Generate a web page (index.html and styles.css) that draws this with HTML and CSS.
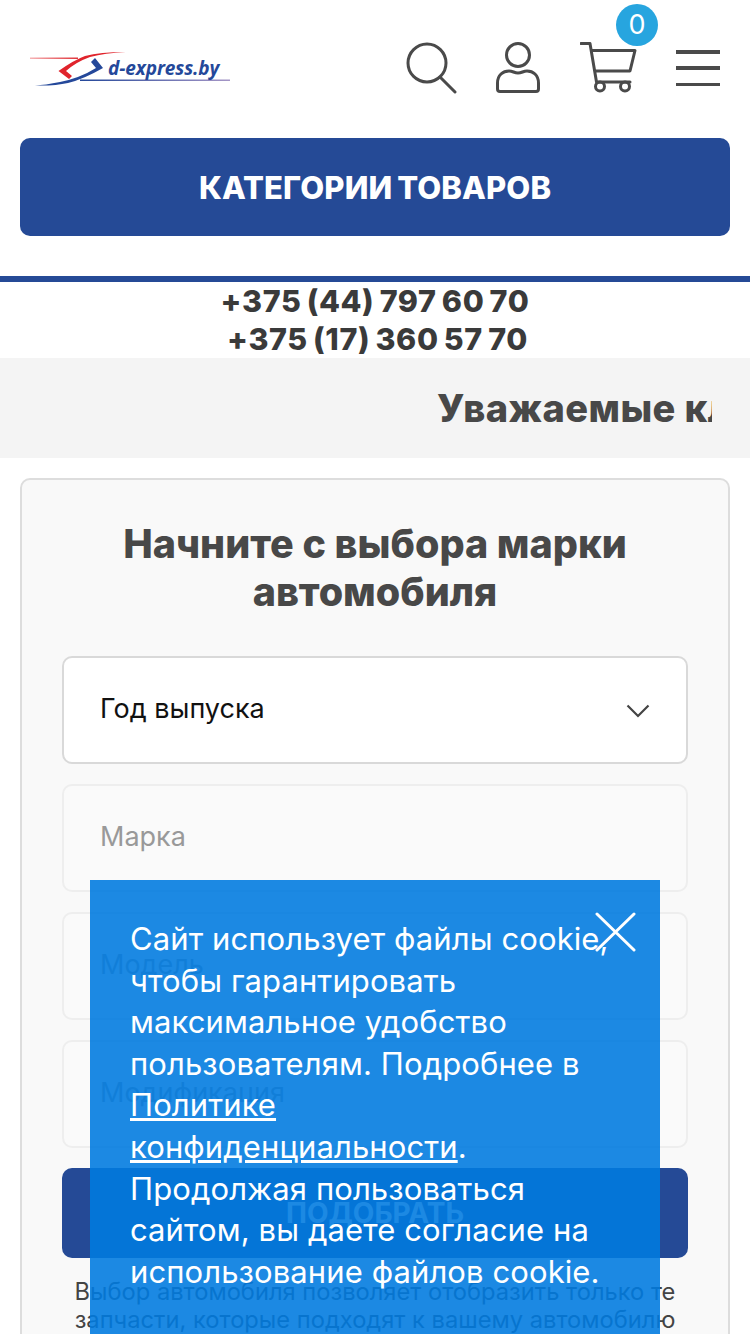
FILE: index.html
```html
<!DOCTYPE html>
<html lang="ru">
<head>
<meta charset="utf-8">
<title>d-express.by</title>
<link rel="stylesheet" href="styles.css">
</head>
<body>
<header class="header">
  <a class="logo">
    <svg class="logo-mark" width="202" height="36" viewBox="0 0 202 36">
      <defs>
        <linearGradient id="lineBlue" x1="0" x2="1"><stop offset="0" stop-color="#24489a"/><stop offset="1" stop-color="#a596c6"/></linearGradient>
        <linearGradient id="lineRed" x1="0" x2="1"><stop offset="0" stop-color="#f6b4b6"/><stop offset="1" stop-color="#e0343a"/></linearGradient>
      </defs>
      <rect x="0" y="5.500" width="48" height="1.500" fill="url(#lineRed)"/>
      <path d="M95.700 0 Q70 0 55 4 Q44 8 28.500 19 L39 27 L42 24 L36 19 Q46 10 60 5 Q75 1 95.700 0 Z" fill="#e0242c"/>
      <path d="M5 33.500 Q25 34 38 31 Q54 27 73 16 L65 6 L61 10 L66 16 Q50 26 30 30 Q15 33 5 33.500 Z" fill="#24489a"/>
      <rect x="50" y="27.500" width="150" height="1.500" fill="url(#lineBlue)"/>
    </svg>
    <span class="logo-text">d-express.by</span>
  </a>
  <nav class="icons">
    <svg class="icon" width="52" height="52" viewBox="0 0 52 52" fill="none" stroke="#4a4a4a" stroke-width="3"><circle cx="21" cy="21" r="19"/><path d="M34 35 L49 50" stroke-linecap="round"/></svg>
    <svg class="icon" width="46" height="52" viewBox="0 0 46 52" fill="none" stroke="#4a4a4a" stroke-width="3"><circle cx="22" cy="13" r="11.500"/><path d="M1.500 47 V41 C1.500 33 7 29 13 29 C17 29 18 31 22 31 C26 31 27 29 31 29 C37 29 42.500 33 42.500 41 V47 Q42.500 49.500 40 49.500 H4 Q1.500 49.500 1.500 47 Z"/></svg>
    <span class="cart">
      <svg class="icon" width="58" height="52" viewBox="0 0 58 52" fill="none" stroke="#4a4a4a" stroke-width="3"><path d="M1 1.500 H10 L16.500 40 H50" stroke-linecap="round" stroke-linejoin="round"/><path d="M12 8.500 H55 L50 29 H14.500" stroke-linejoin="round"/><circle cx="20" cy="44.500" r="4.500"/><circle cx="45" cy="44.500" r="4.500"/></svg>
      <span class="badge">0</span>
    </span>
    <span class="burger"><i></i><i></i><i></i></span>
  </nav>
</header>
<div class="cat-wrap"><button class="cat-btn">КАТЕГОРИИ ТОВАРОВ</button></div>
<div class="phones">
  <div>+375 (44) 797 60 70</div>
  <div class="phone-second">+375 (17) 360 57 70</div>
</div>
<div class="ticker"><div class="ticker-clip"><span>Уважаемые клиенты</span></div></div>
<main class="card">
  <h1 class="card-title">Начните с выбора марки автомобиля</h1>
  <div class="field active"><span>Год выпуска</span>
    <svg class="chevron" width="24" height="14" viewBox="0 0 24 14" fill="none" stroke="#444" stroke-width="2.200"><path d="M1.500 1.500 L12 12 L22.500 1.500"/></svg>
  </div>
  <div class="field">Марка</div>
  <div class="field">Модель</div>
  <div class="field">Модификация</div>
  <button class="pick">ПОДОБРАТЬ</button>
  <p class="note">Выбор автомобиля позволяет отобразить только те запчасти, которые подходят к вашему автомобилю</p>
</main>
<aside class="cookie">
  <svg class="cookie-close" width="41" height="40" viewBox="0 0 41 40" stroke="#fff" stroke-width="3" stroke-linecap="round"><path d="M2 2 L39 38 M39 2 L2 38"/></svg>
  <p>Сайт использует файлы cookie, чтобы гарантировать максимальное удобство пользователям. Подробнее в <a>Политике<br>конфиденциальности</a>. Продолжая пользоваться сайтом, вы даете согласие на использование файлов cookie.</p>
</aside>
</body>
</html>
```
FILE: styles.css
```css
* { box-sizing: border-box; }
html, body { margin: 0; padding: 0; }
body { width: 750px; height: 1334px; overflow: hidden; background: #fff; font-family: Inter, Roboto, sans-serif; color: #444; position: relative; }
.header { height: 138px; display: flex; align-items: flex-start; justify-content: space-between; padding: 42px 30px 0 30px; }
.logo { position: relative; display: block; width: 202px; height: 36px; margin-top: 10px; }
.logo-mark { display: block; }
.logo-text { position: absolute; left: 78px; top: 4px; font: italic 700 19px "Open Sans", sans-serif; color: #24489a; line-height: 24px; letter-spacing: -.1px; }
.icons { display: flex; align-items: flex-start; gap: 38px; }
.icon { display: block; }
.cart { position: relative; display: block; }
.badge { position: absolute; left: 36px; top: -38px; width: 42px; height: 42px; border-radius: 50%; background: #27a5df; color: #fff; font-size: 27px; line-height: 42px; text-align: center; }
.burger { width: 44px; height: 36px; margin-top: 8px; display: flex; flex-direction: column; justify-content: space-between; }
.burger i { display: block; height: 3.500px; background: #4a4a4a; }
.cat-wrap { padding: 0 20px; }
.cat-btn { display: block; width: 710px; height: 98px; border: 0; border-radius: 10px; background: #254a96; color: #fff; font: 800 31px Inter, Roboto, sans-serif; letter-spacing: .1px; word-spacing: -2px; }
.phones { margin-top: 40px; border-top: 6px solid #254a96; height: 82px; text-align: center; font-weight: 800; font-size: 30.500px; line-height: 38px; color: #3a3a3a; word-spacing: -2px; letter-spacing: .6px; }
.phone-second { padding-left: 5px; }
.ticker { height: 100px; background: #f4f4f4; padding-left: 437px; display: flex; align-items: center; }
.ticker-clip { width: 275px; overflow: hidden; white-space: nowrap; font-weight: 800; font-size: 38px; letter-spacing: .4px; color: #484848; }
.card { margin: 20px 20px 0; height: 900px; padding: 40px 40px 0; border: 2px solid #ddd; border-radius: 10px; background: #f9f9f9; }
.card-title { margin: 0 0 40px; font-size: 39.500px; line-height: 48px; font-weight: 800; text-align: center; color: #484848; }
.field { height: 108px; margin-bottom: 20px; padding: 0 36px 3px; display: flex; align-items: center; justify-content: space-between; border: 2px solid #eee; border-radius: 10px; background: #fafafa; font-size: 27px; color: #999; }
.field.active { border-color: #d9d9d9; background: #fff; color: #111; }
.chevron { margin-top: 5px; }
.pick { display: block; width: 100%; height: 90px; border: 0; border-radius: 10px; background: #254a96; color: #fff; font: 700 28px Inter, Roboto, sans-serif; }
.note { margin: 20px -14px 0; font-size: 23.700px; line-height: 27.500px; text-align: center; color: #444; }
.cookie { position: absolute; left: 90px; top: 880px; width: 570px; height: 454px; padding: 38px 40px 0; background: rgba(0, 123, 224, .89); color: #fff; }
.cookie p { margin: 0; font-size: 31px; line-height: 41.600px; letter-spacing: .1px; }
.cookie a { text-decoration: underline; }
.cookie-close { position: absolute; left: 505px; top: 32px; }
```
